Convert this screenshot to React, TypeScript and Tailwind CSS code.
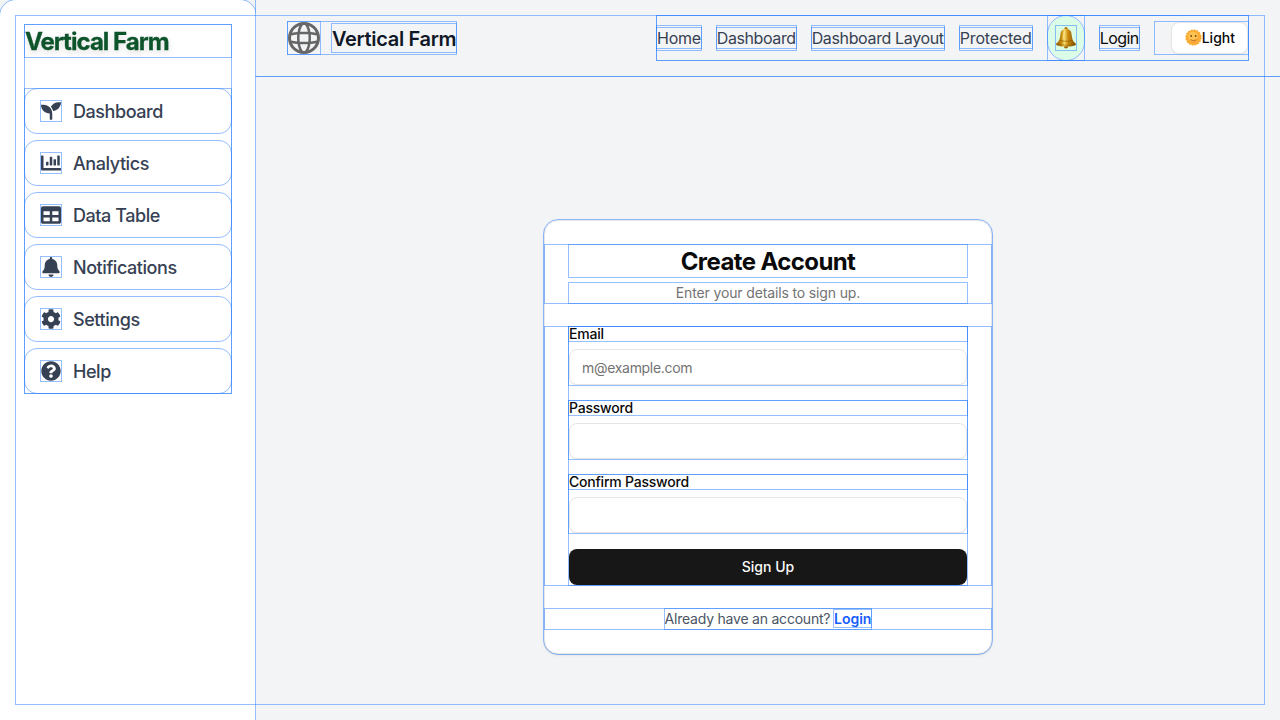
import type { ReactNode } from "react";
import { FaSeedling, FaChartBar, FaTable, FaBell, FaCog, FaQuestionCircle } from "react-icons/fa";

const box = "outline outline-1 outline-blue-500/50";

const sidebarItems = [
  { label: "Dashboard", Icon: FaSeedling },
  { label: "Analytics", Icon: FaChartBar },
  { label: "Data Table", Icon: FaTable },
  { label: "Notifications", Icon: FaBell },
  { label: "Settings", Icon: FaCog },
  { label: "Help", Icon: FaQuestionCircle },
];

function Globe() {
  return (
    <svg viewBox="0 0 16 16" className={`size-8 shrink-0 ${box}`}>
      <path
        fillRule="evenodd"
        clipRule="evenodd"
        fill="#666"
        d="M10.27 14.1a6.5 6.5 0 0 0 3.67-3.45q-1.24.21-2.7.34-.31 1.83-.97 3.1M8 16A8 8 0 1 0 8 0a8 8 0 0 0 0 16m.48-1.52a7 7 0 0 1-.96 0H7.5a4 4 0 0 1-.84-1.32q-.38-.89-.63-2.08a40 40 0 0 0 3.92 0q-.25 1.2-.63 2.08a4 4 0 0 1-.84 1.31zm2.94-4.76q1.66-.15 2.95-.43a7 7 0 0 0 0-2.58q-1.3-.27-2.95-.43a18 18 0 0 1 0 3.44m-1.27-3.54a17 17 0 0 1 0 3.64 39 39 0 0 1-4.3 0 17 17 0 0 1 0-3.64 39 39 0 0 1 4.3 0m1.1-1.17q1.45.13 2.69.34a6.5 6.5 0 0 0-3.67-3.44q.65 1.26.98 3.1M8.48 1.5l.01.02q.41.37.84 1.31.38.89.63 2.08a40 40 0 0 0-3.92 0q.25-1.2.63-2.08a4 4 0 0 1 .85-1.32 7 7 0 0 1 .96 0m-2.75.4a6.5 6.5 0 0 0-3.67 3.44 29 29 0 0 1 2.7-.34q.31-1.83.97-3.1M4.58 6.28q-1.66.16-2.95.43a7 7 0 0 0 0 2.58q1.3.27 2.95.43a18 18 0 0 1 0-3.44m.17 4.71q-1.45-.12-2.69-.34a6.5 6.5 0 0 0 3.67 3.44q-.65-1.27-.98-3.1"
      />
    </svg>
  );
}

function GoldBell() {
  return (
    <svg viewBox="0 0 20 24" className={`h-6 w-5 ${box}`}>
      <defs>
        <linearGradient id="bell" x1="0" x2="1" y1="0" y2="0">
          <stop offset="0" stopColor="#8f5c08" />
          <stop offset="0.28" stopColor="#c98c12" />
          <stop offset="0.42" stopColor="#f8dc6c" />
          <stop offset="0.6" stopColor="#c98a10" />
          <stop offset="1" stopColor="#7d4d04" />
        </linearGradient>
      </defs>
      <circle cx="10" cy="2.6" r="1.6" fill="#a06c0c" />
      <circle cx="10" cy="20.4" r="2.1" fill="#95640a" />
      <path
        fill="url(#bell)"
        d="M10 2.800c3.300 0 5.300 2.200 5.600 5.600.4 4.200 1.100 6.700 4 9.100.7.700.3 1.500-.8 1.900-2.300.8-5.200 1.200-8.800 1.200s-6.500-.4-8.800-1.200c-1.100-.4-1.500-1.200-.8-1.900 2.900-2.400 3.600-4.900 4-9.100.3-3.400 2.300-5.600 5.600-5.600z"
      />
      <path fill="none" stroke="#7a4c05" strokeOpacity="0.6" strokeWidth="0.8" d="M1.300 17.900c4.500 1.800 12.900 1.800 17.400 0M4 14.300c3.600 1.300 8.400 1.300 12 0" />
      <path fill="none" stroke="#fff3b0" strokeOpacity="0.7" strokeWidth="0.9" d="M8.500 5.500c-1 2.500-.7 5-1.500 8" />
    </svg>
  );
}

function SunFace() {
  return (
    <svg viewBox="0 0 18 18" className="size-[17px] shrink-0 -translate-y-px">
      <circle cx="9" cy="9" r="8" fill="#fbb52f" />
      <circle cx="9" cy="9" r="8" fill="none" stroke="#f2a024" strokeWidth="1.200" strokeDasharray="2 1.140" />
      <circle cx="9" cy="9" r="6.600" fill="#f9a63a" />
      <circle cx="8.400" cy="8" r="5.200" fill="#ffc352" />
      <ellipse cx="6.500" cy="7.400" rx="1" ry="1.100" fill="#7a4a1c" />
      <ellipse cx="11.300" cy="7.400" rx="1" ry="1.100" fill="#7a4a1c" />
      <path d="M6.300 11.600q2.700 1.800 5.400 0" fill="none" stroke="#b8641c" strokeWidth="1" strokeLinecap="round" />
    </svg>
  );
}

function NavLink({ children, className }: { children: ReactNode; className: string }) {
  return (
    <li className={`whitespace-nowrap ${className} ${box}`}>
      <a href="#" className={box}>{children}</a>
    </li>
  );
}

function Field({ label, type, placeholder }: { label: string; type: string; placeholder?: string }) {
  return (
    <div className={`flex flex-col gap-2 ${box}`}>
      <label className={`text-sm leading-none font-medium tracking-[-0.22px] ${box}`}>{label}</label>
      <input
        type={type}
        placeholder={placeholder}
        className="h-9 w-full rounded-lg border border-[#e5e5e5] bg-white px-3 py-1 text-sm tracking-[-0.3px] shadow-xs outline-none placeholder:text-[#737373]"
      />
    </div>
  );
}

export default function App() {
  return (
    <div className="relative flex h-[720px] w-[1280px] overflow-hidden bg-gray-100 font-['Inter',sans-serif] text-neutral-950">
      <aside className={`h-[720px] w-64 shrink-0 rounded-t-2xl bg-white p-[25px] ${box}`}>
        <div className={box}>
          <h2 className={`mb-8 text-2xl font-bold tracking-[-0.96px] text-green-900 ${box}`}>
            <span className="inline-block translate-y-px drop-shadow-md [-webkit-text-stroke:0.3px_currentColor]">Vertical Farm</span>
          </h2>
          <nav className={`flex flex-col gap-2 ${box}`}>
            {sidebarItems.map(({ label, Icon }) => (
              <a
                key={label}
                href="#"
                className={`flex items-center gap-3 rounded-xl px-4 py-2 text-lg font-medium tracking-[-0.44px] text-gray-700 ${box}`}
              >
                <Icon className={`size-5 shrink-0 ${box}`} />
                <span className="translate-y-px">{label}</span>
              </a>
            ))}
          </nav>
        </div>
      </aside>

      <div className="relative flex min-w-0 flex-1 flex-col">
        <header className={`mb-px flex h-[76px] shrink-0 items-center justify-between bg-gray-100 px-8 ${box}`}>
          <a href="#" className={`flex items-center gap-3 ${box}`}>
            <Globe />
            <span className={`text-xl font-semibold tracking-[-0.32px] text-gray-900 ${box}`}>
              <span className="inline-block translate-y-px">Vertical Farm</span>
            </span>
          </a>
          <nav className={box}>
            <ul className={`flex h-11 items-center gap-4 ${box}`}>
              <NavLink className="tracking-[-0.3px] text-gray-700">Home</NavLink>
              <NavLink className="tracking-[-0.4px] text-gray-700">Dashboard</NavLink>
              <NavLink className="tracking-[-0.36px] text-gray-700">Dashboard Layout</NavLink>
              <NavLink className="tracking-[-0.15px] text-gray-700">Protected</NavLink>
              <li className={box}>
                <button className={`flex h-11 w-9 items-center justify-center rounded-full bg-green-100 ${box}`}>
                  <GoldBell />
                </button>
              </li>
              <NavLink className="tracking-[-0.56px] text-neutral-950">Login</NavLink>
              <li className={`pl-4 ${box}`}>
                <button className="flex h-8 items-center rounded-lg border border-[#e5e5e5] bg-white pr-3 pl-[13px] text-sm font-medium shadow-xs">
                  <SunFace />
                  Light
                </button>
              </li>
            </ul>
          </nav>
        </header>

        <main className={`flex h-[720px] shrink-0 items-center justify-center bg-gray-100 ${box}`}>
          <section className={`flex w-md flex-col gap-6 rounded-[14px] border border-[#e5e5e5] bg-white py-6 shadow-sm ${box}`}>
            <div className={`flex flex-col gap-1.5 px-6 text-center ${box}`}>
              <h1 className={`text-2xl font-bold tracking-[-0.6px] ${box}`}>
                <span className="inline-block translate-y-px">Create Account</span>
              </h1>
              <p className={`text-sm tracking-[-0.14px] text-[#737373] ${box}`}>Enter your details to sign up.</p>
            </div>
            <div className={`px-6 ${box}`}>
              <form className={`flex flex-col gap-4 ${box}`}>
                <Field label="Email" type="email" placeholder="m@example.com" />
                <Field label="Password" type="password" />
                <Field label="Confirm Password" type="password" />
                <button type="button" className="h-9 rounded-lg bg-neutral-900 text-sm font-medium text-neutral-50 shadow-xs">
                  Sign Up
                </button>
              </form>
            </div>
            <div className={`flex justify-center px-6 ${box}`}>
              <p className={`text-sm tracking-[-0.22px] text-gray-600 ${box}`}>
                Already have an account?{" "}
                <a href="#" className={`font-semibold tracking-normal text-blue-600 ${box}`}>Login</a>
              </p>
            </div>
          </section>
        </main>
      </div>
      <div className={`pointer-events-none absolute inset-4 ${box}`} />
    </div>
  );
}
